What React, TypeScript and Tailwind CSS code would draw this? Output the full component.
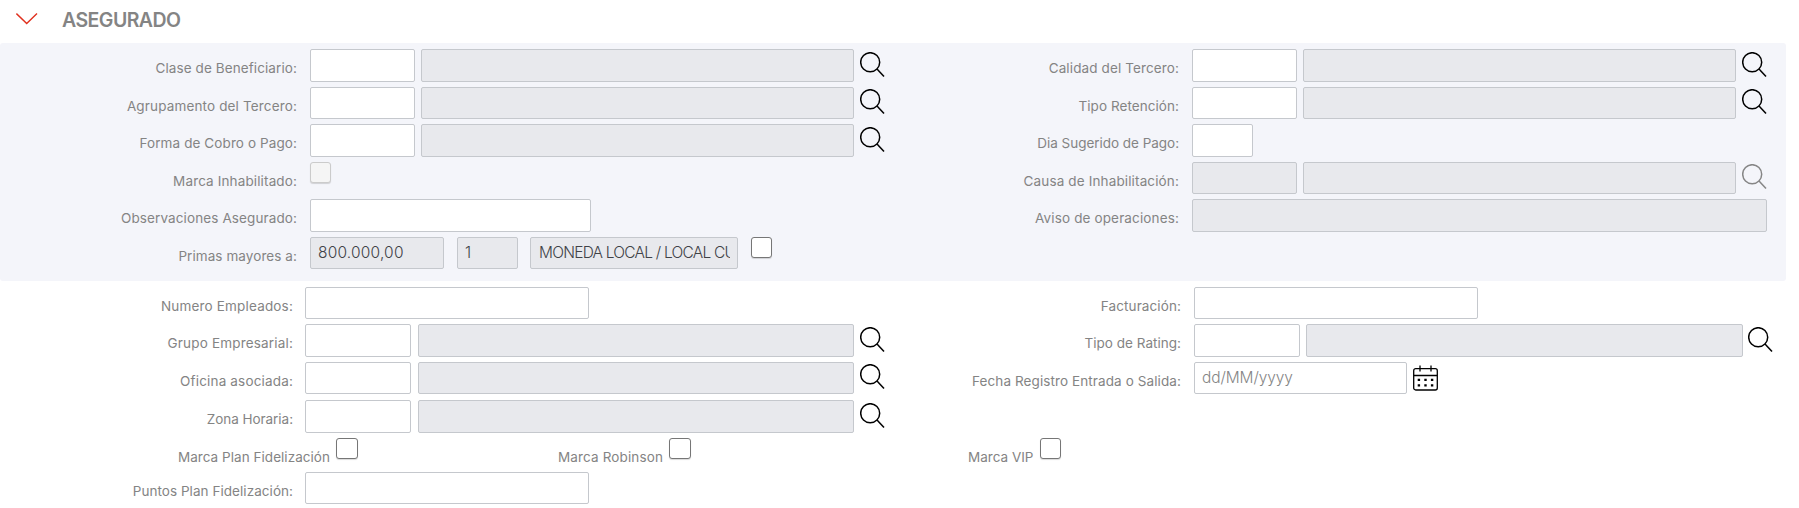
import type { ReactNode } from 'react';

function Label({ text, className }: { text: string; className: string }) {
  return (
    <span className={`shrink-0 whitespace-nowrap pt-[8px] text-right text-[13.5px] leading-[22px] text-[#848484] ${className}`}>
      {text}
    </span>
  );
}

function Row({ height, children }: { height: string; children: ReactNode }) {
  return <div className={`flex items-start ${height}`}>{children}</div>;
}

function Field({
  className,
  disabled,
  tall,
  children,
}: {
  className: string;
  disabled?: boolean;
  tall?: boolean;
  children?: ReactNode;
}) {
  return (
    <div
      className={`shrink-0 overflow-hidden rounded-[2px] border border-[#c5c8cd] px-[7px] text-[15.5px] leading-[30px] font-light whitespace-nowrap ${
        tall ? 'h-[33px]' : 'h-[32px]'
      } ${disabled ? 'bg-[#e8e9ed]' : 'bg-white'} ${className}`}
    >
      <div className="overflow-hidden">{children}</div>
    </div>
  );
}

function Check({ className = '', disabled }: { className?: string; disabled?: boolean }) {
  return (
    <span
      className={`h-[21px] w-[21px] shrink-0 rounded-[3px] border ${
        disabled ? 'border-[#cbcbcb] bg-[#f5f5f5]' : 'border-[#767676] bg-white'
      } shadow-[0_1px_1px_rgba(0,0,0,0.15)] ${className}`}
    />
  );
}

function Search({ className = '', muted }: { className?: string; muted?: boolean }) {
  return (
    <svg
      viewBox="0 0 25 26"
      className={`h-[26px] w-[25px] shrink-0 ${muted ? 'text-[#868686]' : 'text-black'} ${className}`}
      fill="none"
      stroke="currentColor"
      strokeWidth="1.5"
    >
      <circle cx="10.2" cy="10.2" r="9.5" />
      <path d="M17 17l7 7.6" />
    </svg>
  );
}

function Calendar() {
  return (
    <svg viewBox="0 0 25 26" className="ml-[6px] mt-[3px] h-[26px] w-[25px] shrink-0" fill="none" stroke="#000" strokeWidth="1.3">
      <rect x="0.7" y="3.7" width="23.6" height="21.3" rx="2" />
      <path d="M0.7 10.5h23.6M7 0.5v6M18 0.5v6" />
      <path d="M4.7 14.8h2.4M11.3 14.8h2.4M17.9 14.8h2.4M4.7 20.4h2.4M11.3 20.4h2.4M17.9 20.4h2.4" strokeWidth="2.3" />
    </svg>
  );
}

export default function App() {
  return (
    <div className="h-[508px] w-[1799px] overflow-hidden bg-white font-['Inter','Liberation_Sans',sans-serif]">
      <header className="flex h-[43px] items-start">
        <svg viewBox="0 0 22 12" className="ml-[16px] mt-[12.5px] h-[12px] w-[22px]" fill="none" stroke="#e0301e" strokeWidth="1.4">
          <path d="M0.4 0.6L10.7 10.6L21 0.6" />
        </svg>
        <h2 className="ml-[24px] mt-[8px] text-[19.5px] leading-[24px] font-semibold tracking-[-0.55px] text-[#848484]">ASEGURADO</h2>
      </header>

      <section className="flex h-[238px] w-[1786px] rounded-[3px] bg-[#f4f5fa] pt-[6px]">
        <div className="w-[890px] shrink-0">
          <Row height="h-[38px]">
            <Label text="Clase de Beneficiario:" className="w-[297px] tracking-[0.1px]" />
            <Field tall className="ml-[13px] w-[105px]" />
            <Field tall disabled className="ml-[6px] w-[433px]" />
            <Search className="ml-[6px] mt-[3px]" />
          </Row>
          <Row height="h-[37px]">
            <Label text="Agrupamento del Tercero:" className="w-[297px] tracking-[0.15px]" />
            <Field className="ml-[13px] w-[105px]" />
            <Field disabled className="ml-[6px] w-[433px]" />
            <Search className="ml-[6px] mt-[2px]" />
          </Row>
          <Row height="h-[38px]">
            <Label text="Forma de Cobro o Pago:" className="w-[297px] tracking-[0.1px]" />
            <Field tall className="ml-[13px] w-[105px]" />
            <Field tall disabled className="ml-[6px] w-[433px]" />
            <Search className="ml-[6px] mt-[3px]" />
          </Row>
          <Row height="h-[37px]">
            <Label text="Marca Inhabilitado:" className="w-[297px] tracking-[0.13px]" />
            <Check disabled className="ml-[13px]" />
          </Row>
          <Row height="h-[38px]">
            <Label text="Observaciones Asegurado:" className="w-[297px] tracking-[0.11px]" />
            <Field tall className="ml-[13px] w-[281px]" />
          </Row>
          <Row height="h-[32px]">
            <Label text="Primas mayores a:" className="w-[297px] tracking-[0.08px]" />
            <Field disabled className="ml-[13px] w-[134px] tracking-[0.2px] text-[#404247]">800.000,00</Field>
            <Field disabled className="ml-[13px] w-[61px] text-[#404247]">1</Field>
            <Field disabled className="ml-[12px] w-[208px] pl-[8px] tracking-[-0.77px] text-[#404247]">MONEDA LOCAL / LOCAL CU</Field>
            <Check className="ml-[13px]" />
          </Row>
        </div>

        <div className="shrink-0">
          <Row height="h-[38px]">
            <Label text="Calidad del Tercero:" className="w-[289px] tracking-[0.12px]" />
            <Field tall className="ml-[13px] w-[105px]" />
            <Field tall disabled className="ml-[6px] w-[433px]" />
            <Search className="ml-[6px] mt-[3px]" />
          </Row>
          <Row height="h-[37px]">
            <Label text="Tipo Retención:" className="w-[289px] tracking-[0.06px]" />
            <Field className="ml-[13px] w-[105px]" />
            <Field disabled className="ml-[6px] w-[433px]" />
            <Search className="ml-[6px] mt-[2px]" />
          </Row>
          <Row height="h-[38px]">
            <Label text="Dia Sugerido de Pago:" className="w-[289px] tracking-[-0.03px]" />
            <Field tall className="ml-[13px] w-[61px]" />
          </Row>
          <Row height="h-[37px]">
            <Label text="Causa de Inhabilitación:" className="w-[289px] tracking-[0.14px]" />
            <Field disabled className="ml-[13px] w-[105px]" />
            <Field disabled className="ml-[6px] w-[433px]" />
            <Search muted className="ml-[6px] mt-[2px]" />
          </Row>
          <Row height="h-[38px]">
            <Label text="Aviso de operaciones:" className="w-[289px] tracking-[0.14px]" />
            <Field tall disabled className="ml-[13px] w-[575px]" />
          </Row>
        </div>
      </section>

      <section className="flex pt-[6px]">
        <div className="w-[890px] shrink-0">
          <Row height="h-[37px]">
            <Label text="Numero Empleados:" className="w-[293px] tracking-[0.18px]" />
            <Field className="ml-[12px] w-[284px]" />
          </Row>
          <Row height="h-[38px]">
            <Label text="Grupo Empresarial:" className="w-[293px] tracking-[0.18px]" />
            <Field tall className="ml-[12px] w-[106px]" />
            <Field tall disabled className="ml-[7px] w-[436px]" />
            <Search className="ml-[6px] mt-[3px]" />
          </Row>
          <Row height="h-[38px]">
            <Label text="Oficina asociada:" className="w-[293px] tracking-[0.17px]" />
            <Field className="ml-[12px] w-[106px]" />
            <Field disabled className="ml-[7px] w-[436px]" />
            <Search className="ml-[6px] mt-[2px]" />
          </Row>
          <Row height="h-[38px]">
            <Label text="Zona Horaria:" className="w-[293px] tracking-[-0.04px]" />
            <Field tall className="ml-[12px] w-[106px]" />
            <Field tall disabled className="ml-[7px] w-[436px]" />
            <Search className="ml-[6px] mt-[3px]" />
          </Row>
          <Row height="h-[34px]">
            <Label text="Marca Plan Fidelización" className="w-[330px] tracking-[0.04px]" />
            <Check className="ml-[6px] w-[22px]" />
            <Label text="Marca Robinson" className="w-[305px] tracking-[0.13px]" />
            <Check className="ml-[6px] w-[22px]" />
          </Row>
          <Row height="h-[32px]">
            <Label text="Puntos Plan Fidelización:" className="w-[293px] tracking-[0.05px]" />
            <Field className="ml-[12px] w-[284px]" />
          </Row>
        </div>

        <div className="shrink-0">
          <Row height="h-[37px]">
            <Label text="Facturación:" className="w-[291px] tracking-[0.1px]" />
            <Field className="ml-[13px] w-[284px]" />
          </Row>
          <Row height="h-[38px]">
            <Label text="Tipo de Rating:" className="w-[291px] tracking-[0.03px]" />
            <Field tall className="ml-[13px] w-[106px]" />
            <Field tall disabled className="ml-[6px] w-[437px]" />
            <Search className="ml-[5px] mt-[3px]" />
          </Row>
          <Row height="h-[76px]">
            <Label text="Fecha Registro Entrada o Salida:" className="w-[291px] tracking-[0.1px]" />
            <Field className="ml-[13px] w-[213px] tracking-[-0.1px] text-[#858585]">dd/MM/yyyy</Field>
            <Calendar />
          </Row>
          <Row height="h-[34px]">
            <Label text="Marca VIP" className="w-[143.5px]" />
            <Check className="ml-[6.5px]" />
          </Row>
        </div>
      </section>
    </div>
  );
}
